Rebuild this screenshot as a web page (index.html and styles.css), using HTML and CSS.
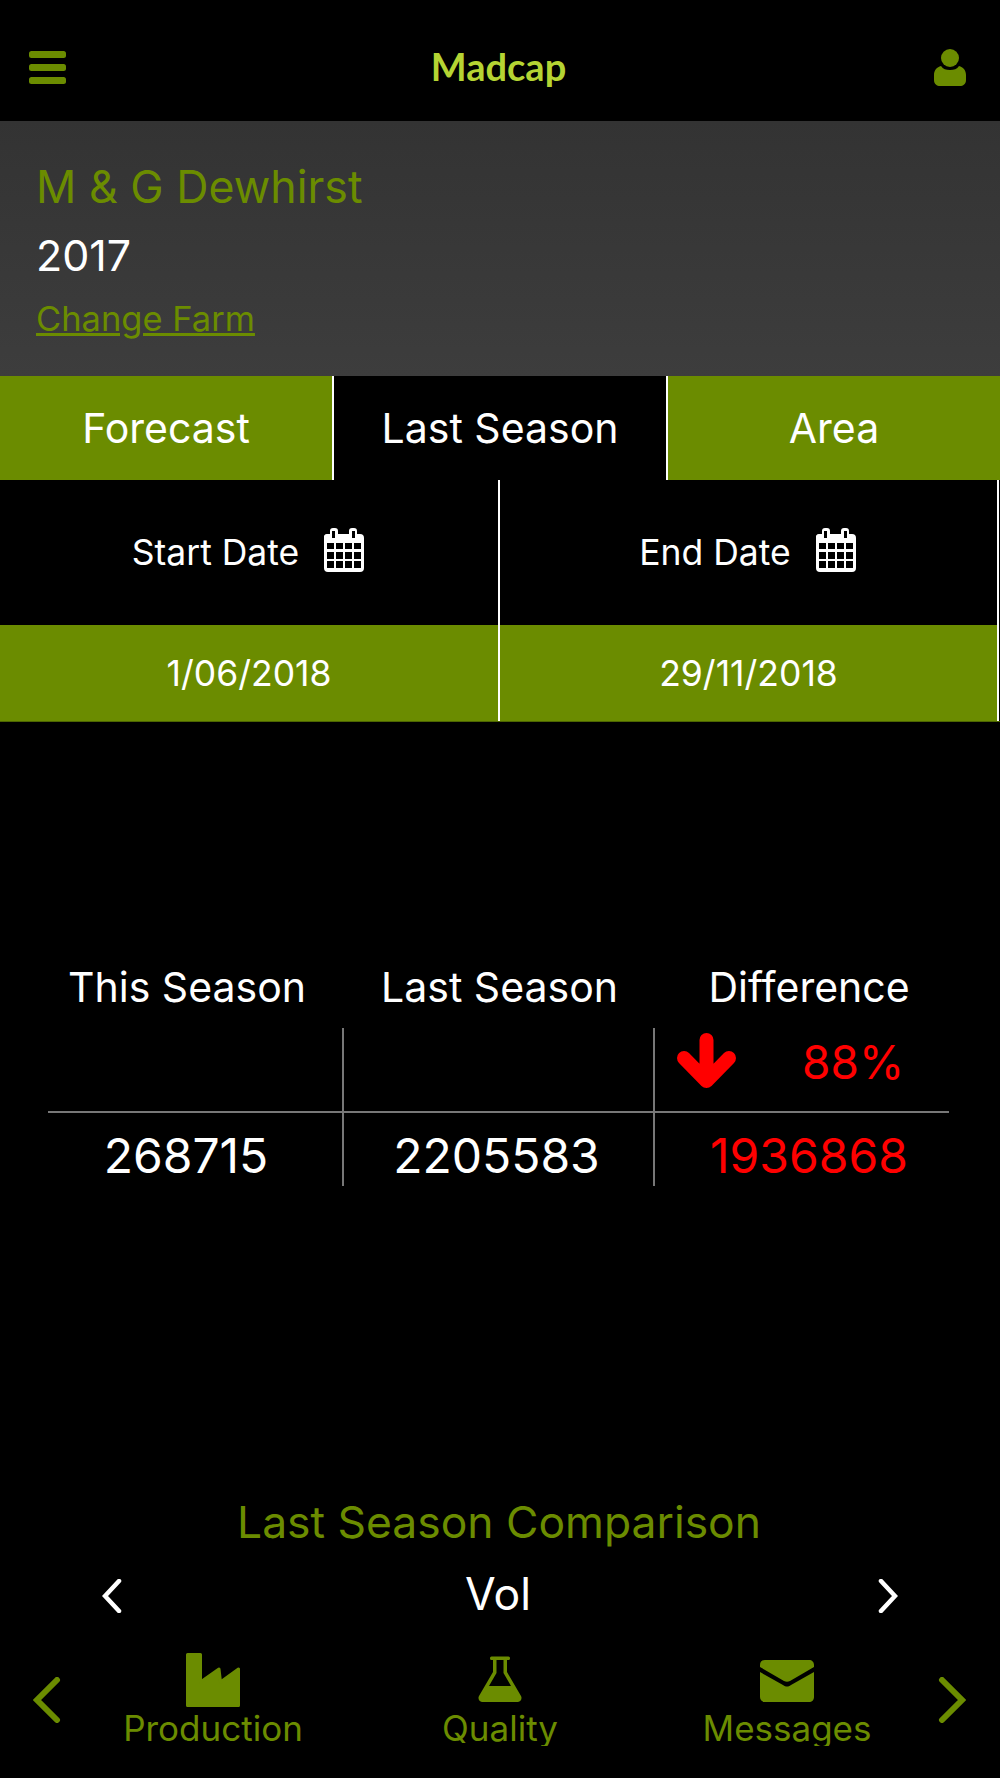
FILE: index.html
```html
<!DOCTYPE html>
<html lang="en">

<head>
    <meta charset="UTF-8">
    <meta name="viewport" content="width=device-width, initial-scale=1.0">
    <title>Madcap</title>
    <link rel="stylesheet" href="styles.css">
</head>

<body>
    <svg class="defs" width="0" height="0">
        <symbol id="calendar" viewBox="0 0 40 44">
            <path fill="#fff" d="M3 6h3V3a3 3 0 0 1 3-3h2a3 3 0 0 1 3 3v3h11V3a3 3 0 0 1 3-3h2a3 3 0 0 1 3 3v3h3a4 4 0 0 1 4 4v30a4 4 0 0 1-4 4H4a4 4 0 0 1-4-4V10a3 3 0 0 1 3-4z"/>
            <path fill="#000" d="M8 3h3v7H8zM28 3h3v7h-3zM3 15h7v6H3zM12 15h7v6h-7zM21 15h7v6h-7zM30 15h7v6h-7zM3 24h7v7H3zM12 24h7v7h-7zM21 24h7v7h-7zM30 24h7v7h-7zM3 33h7v7H3zM12 33h7v7h-7zM21 33h7v7h-7zM30 33h7v7h-7z"/>
        </symbol>
    </svg>

    <header class="topbar">
        <svg class="menu-icon" viewBox="0 0 37 33">
            <rect width="37" height="7" y="0" rx="2.5"/>
            <rect width="37" height="7" y="13" rx="2.5"/>
            <rect width="37" height="7" y="26" rx="2.5"/>
        </svg>
        <div class="brand">Madcap</div>
        <svg class="user-icon" viewBox="0 0 32 37">
            <circle cx="16" cy="9" r="9"/>
            <path d="M7 17c2 3 5 4 9 4s7-1 9-4c4 1 7 4 7 9v5c0 4-3 6-6 6H6c-3 0-6-2-6-6v-5c0-5 3-8 7-9z"/>
        </svg>
    </header>

    <section class="farm">
        <h1 class="farm-name">M &amp; G Dewhirst</h1>
        <div class="farm-year">2017</div>
        <a class="farm-link" href="#">Change Farm</a>
    </section>

    <nav class="tabs">
        <div class="tab">Forecast</div>
        <div class="tab tab-active">Last Season</div>
        <div class="tab">Area</div>
    </nav>

    <section class="dates">
        <div class="date-head">Start Date <svg class="cal-icon"><use href="#calendar"/></svg></div>
        <div class="date-head">End Date <svg class="cal-icon"><use href="#calendar"/></svg></div>
        <div class="date-value">1/06/2018</div>
        <div class="date-value">29/11/2018</div>
    </section>

    <section class="stats">
        <div class="stats-row stats-head">
            <div class="cell cell-a">This Season</div>
            <div class="cell cell-b">Last Season</div>
            <div class="cell cell-c">Difference</div>
        </div>
        <div class="stats-row stats-pct">
            <div class="cell cell-a"></div>
            <div class="cell cell-b"></div>
            <div class="cell cell-c pct">
                <svg class="down-arrow" viewBox="0 0 59 56">
                    <path d="M29.5 7V48M7 25L29.5 48L52 25"/>
                </svg>
                <span class="pct-value">88%</span>
            </div>
        </div>
        <div class="stats-row stats-num">
            <div class="cell cell-a">268715</div>
            <div class="cell cell-b">2205583</div>
            <div class="cell cell-c red">1936868</div>
        </div>
    </section>

    <section class="compare">
        <h2 class="compare-title">Last Season Comparison</h2>
        <div class="compare-pick">
            <svg class="chev chev-white" viewBox="0 0 20 34"><path d="M17 2L3 17L17 32"/></svg>
            <span class="compare-value">Vol</span>
            <svg class="chev chev-white" viewBox="0 0 20 34"><path d="M3 2L17 17L3 32"/></svg>
        </div>
    </section>

    <footer class="bottom">
        <svg class="chev chev-green chev-left" viewBox="0 0 28 46"><path d="M24 3L4 23L24 43"/></svg>
        <div class="bottom-item">
            <svg class="bottom-icon" viewBox="0 0 54 54"><path class="factory" d="M1.500 1.500H14.500V29L33 16L34.500 29L52.500 16V52.500H1.500z"/></svg>
            <span>Production</span>
        </div>
        <div class="bottom-item">
            <svg class="bottom-icon" viewBox="0 0 44 54">
                <path class="flask" fill-rule="evenodd" d="M12 5a1.500 1.500 0 0 1 1.500-1.500h17A1.500 1.500 0 0 1 32 5v.5A1.500 1.500 0 0 1 30.500 7H29V19l14 24c1.500 3-.5 6-3 6H4c-2.500 0-4.500-3-3-6L15 19V7H13.500A1.500 1.500 0 0 1 12 5.500zM18.500 7V20L11 33H33L25.500 20V7z"/>
            </svg>
            <span>Quality</span>
        </div>
        <div class="bottom-item">
            <svg class="bottom-icon" viewBox="0 0 54 54">
                <path class="mail" d="M5 7H49C52 7 54 9 54 12V14L30 28C28 29 26 29 24 28L0 14V12C0 9 2 7 5 7zM0 19L23 32C26 34 28 34 31 32L54 19V44C54 47 52 49 49 49H5C2 49 0 47 0 44z"/>
            </svg>
            <span>Messages</span>
        </div>
        <svg class="chev chev-green chev-right" viewBox="0 0 28 46"><path d="M4 3L24 23L4 43"/></svg>
    </footer>
</body>

</html>
```

FILE: styles.css
```css
body {
    font-family: Inter, "Liberation Sans", sans-serif;
    margin: 0;
    padding: 0;
    background-color: #000;
    color: #fff;
    height: 1778px;
    overflow: hidden;
}

.defs {
    display: block;
    height: 0;
}

/* top bar */
.topbar {
    height: 121px;
    padding: 0 34px 0 29px;
    box-sizing: border-box;
    display: flex;
    align-items: center;
    justify-content: space-between;
}

.menu-icon {
    width: 37px;
    height: 33px;
    margin-top: 14px;
    fill: #6b8c00;
}

.user-icon {
    width: 32px;
    height: 37px;
    margin-top: 14px;
    fill: #6b8c00;
}

.brand {
    font-family: Lato, sans-serif;
    font-weight: 700;
    font-size: 38px;
    color: #b5d433;
    margin-top: 10px;
    margin-right: 3px;
}

/* farm panel */
.farm {
    height: 255px;
    box-sizing: border-box;
    padding: 36px 36px 0;
    background: linear-gradient(#333, #3d3d3d);
}

.farm-name {
    margin: 0;
    font-size: 44.700px;
    line-height: 60px;
    font-weight: 400;
    color: #6b8c00;
}

.farm-year {
    font-size: 43px;
    line-height: 60px;
    margin-top: 8px;
}

.farm-link {
    display: block;
    font-size: 34.500px;
    line-height: 44px;
    margin-top: 12px;
    color: #6b8c00;
}

/* tabs */
.tabs {
    display: grid;
    grid-template-columns: 334px 334px 332px;
    height: 104px;
}

.tab {
    display: flex;
    align-items: center;
    justify-content: center;
    font-size: 41px;
    background-color: #6b8c00;
    border-right: 2px solid #fff;
}

.tab:last-child {
    border-right: none;
}

.tab-active {
    background-color: #000;
}

/* date pickers */
.dates {
    display: grid;
    grid-template-columns: 500px 499px;
    grid-template-rows: 145px 96px;
    border-bottom: 1px solid #4d6600;
}

.date-head,
.date-value {
    display: flex;
    align-items: center;
    justify-content: center;
    border-right: 2px solid #fff;
    font-size: 35.500px;
}

.date-head {
    gap: 25px;
    padding-right: 2px;
}

.date-value {
    background-color: #6b8c00;
}

.cal-icon {
    width: 40px;
    height: 44px;
    margin-top: -6px;
}

/* season numbers */
.stats {
    margin: 228px 51px 0 48px;
}

.stats-row {
    display: grid;
    grid-template-columns: 296px 311px 294px;
}

.cell {
    display: flex;
    align-items: center;
    justify-content: center;
}

.stats-head {
    height: 78px;
    font-size: 41px;
}

.stats-head .cell {
    padding-bottom: 4px;
}

.stats-pct {
    height: 83px;
    border-bottom: 2px solid #777;
}

.stats-num {
    height: 73px;
    font-size: 48px;
}

.stats-num .cell {
    padding-top: 11px;
}

.stats-pct .cell-a,
.stats-pct .cell-b,
.stats-num .cell-a,
.stats-num .cell-b {
    border-right: 2px solid #777;
}

.cell-a {
    padding-right: 18px;
}

.cell-b {
    padding-right: 4px;
}

.cell-c {
    padding-left: 14px;
}

.stats-head .cell-b {
    padding-right: 0;
}

.pct {
    justify-content: flex-start;
    padding-left: 22px;
    padding-bottom: 8px;
    color: #f00;
    font-size: 46px;
}

.pct-value {
    margin-bottom: 8px;
}

.down-arrow {
    width: 59px;
    height: 56px;
    margin-right: 66px;
    margin-top: -9px;
    fill: none;
    stroke: #f00;
    stroke-width: 14;
    stroke-linecap: round;
    stroke-linejoin: round;
}

.red {
    color: #f00;
}

/* comparison */
.compare {
    margin-top: 306px;
    text-align: center;
}

.compare-title {
    margin: 0;
    font-size: 44.400px;
    line-height: 60px;
    font-weight: 400;
    color: #6b8c00;
    margin-right: 2px;
}

.compare-pick {
    display: flex;
    align-items: center;
    justify-content: space-between;
    padding: 0 102px;
    height: 74px;
    margin-top: 5px;
    font-size: 44.500px;
}

.compare-value {
    margin-right: 4px;
}

.compare-pick .chev {
    margin-top: 4px;
}

.chev {
    fill: none;
    stroke-linecap: round;
    stroke-linejoin: miter;
}

.chev-white {
    width: 20px;
    height: 34px;
    stroke: #fff;
    stroke-width: 4.500;
}

.chev-green {
    width: 28px;
    height: 46px;
    margin-top: 24px;
    stroke: #6b8c00;
    stroke-width: 6;
}

.chev-left {
    margin-left: 33px;
}

.chev-right {
    margin-left: 8px;
}

/* bottom nav */
.bottom {
    height: 93px;
    margin-top: 22px;
    display: grid;
    grid-template-columns: 70px 286px 288px 286px 70px;
    align-items: start;
    overflow: hidden;
}

.bottom-item {
    display: flex;
    flex-direction: column;
    align-items: center;
    font-size: 35px;
    line-height: 42px;
    color: #6b8c00;
}

.bottom-icon {
    width: 54px;
    height: 54px;
    display: block;
}

.factory {
    fill: #6b8c00;
    stroke: #6b8c00;
    stroke-width: 3;
    stroke-linejoin: round;
}

.flask,
.mail {
    fill: #6b8c00;
}
```
